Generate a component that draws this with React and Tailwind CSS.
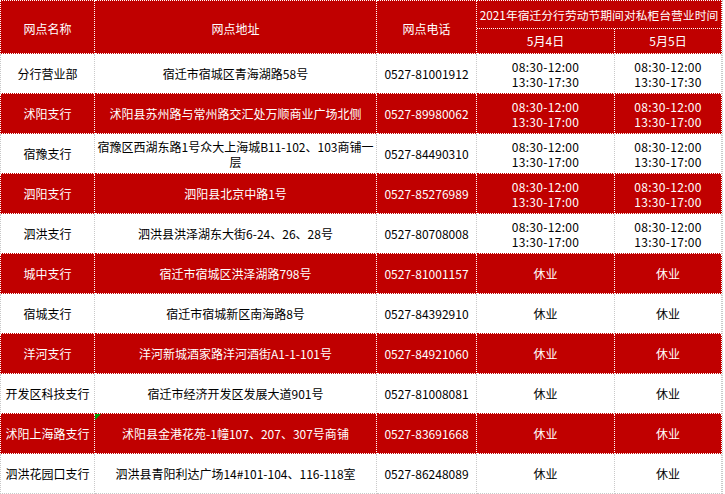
import React from 'react';

const AM = '08:30-12:00';

const rows = [
  { name: '分行营业部', addr: '宿迁市宿城区青海湖路58号', phone: '0527-81001912', end: '17:30' },
  { name: '沭阳支行', addr: '沭阳县苏州路与常州路交汇处万顺商业广场北侧', phone: '0527-89980062', end: '17:00' },
  { name: '宿豫支行', addr: ['宿豫区西湖东路1号众大上海城B11-102、103商铺一', '层'], phone: '0527-84490310', end: '17:00' },
  { name: '泗阳支行', addr: '泗阳县北京中路1号', phone: '0527-85276989', end: '17:00' },
  { name: '泗洪支行', addr: '泗洪县洪泽湖东大街6-24、26、28号', phone: '0527-80708008', end: '17:00' },
  { name: '城中支行', addr: '宿迁市宿城区洪泽湖路798号', phone: '0527-81001157' },
  { name: '宿城支行', addr: '宿迁市宿城新区南海路8号', phone: '0527-84392910' },
  { name: '洋河支行', addr: '洋河新城酒家路洋河酒街A1-1-101号', phone: '0527-84921060' },
  { name: '开发区科技支行', addr: '宿迁市经济开发区发展大道901号', phone: '0527-81008081' },
  { name: '沭阳上海路支行', addr: '沭阳县金港花苑-1幢107、207、307号商铺', phone: '0527-83691668', flag: true },
  { name: '泗洪花园口支行', addr: '泗洪县青阳利达广场14#101-104、116-118室', phone: '0527-86248089' },
];

const headCell = 'flex items-center justify-center text-center text-white bg-[#c00000] border-r border-b border-dotted border-white';

function Hours({ end }) {
  if (!end) return <span>休业</span>;
  return (
    <div className="leading-[15px] tracking-[0.3px]">
      <div>{AM}</div>
      <div>{'13:30-' + end}</div>
    </div>
  );
}

export default function App() {
  return (
    <div
      className="w-[725px] h-[494px] overflow-hidden bg-white flex text-[12px]"
      style={{ fontFamily: '"Noto Sans CJK SC", "Noto Sans", sans-serif' }}
    >
      <div className="w-[722px] grid grid-cols-[95px_282px_100px_138px_107px] grid-rows-[29px_25px_repeat(11,40px)]">
        <div className={headCell + ' row-span-2 border-l border-t pt-[3px]'}>网点名称</div>
        <div className={headCell + ' row-span-2 border-t pt-[3px]'}>网点地址</div>
        <div className={headCell + ' row-span-2 border-t pt-[3px]'}>网点电话</div>
        <div className={headCell + ' col-span-2 border-t whitespace-nowrap text-[11.8px]'}>
          2021年宿迁分行劳动节期间对私柜台营业时间
        </div>
        <div className={headCell}>5月4日</div>
        <div className={headCell}>5月5日</div>

        {rows.map((r, i) => {
          const red = i % 2 === 1;
          const last = i === rows.length - 1;
          const cell = red
            ? 'flex items-center justify-center text-center bg-[#c00000] text-white border-r border-b border-dotted border-white'
            : 'flex items-center justify-center text-center bg-white text-black border-r border-b border-dotted border-r-[#c8c8c8] ' +
              (last ? 'border-b-[#c8c8c8]' : 'border-b-[#c00000]');
          return (
            <React.Fragment key={r.name}>
              <div className={cell + ' border-l ' + (red ? '' : 'border-l-[#c8c8c8]')}>{r.name}</div>
              <div className={cell + ' relative leading-[15px]'}>
                {r.flag && (
                  <span className="absolute left-0 top-0 w-0 h-0 border-t-[6px] border-r-[6px] border-t-[#00a000] border-r-transparent border-solid" />
                )}
                {Array.isArray(r.addr) ? (
                  <div>
                    <div>{r.addr[0]}</div>
                    <div>{r.addr[1]}</div>
                  </div>
                ) : (
                  r.addr
                )}
              </div>
              <div className={cell}>{r.phone}</div>
              <div className={cell}>
                <Hours end={r.end} />
              </div>
              <div className={cell}>
                <Hours end={r.end} />
              </div>
            </React.Fragment>
          );
        })}
      </div>
      <div className="w-[3px] h-full border-l border-dotted border-[#c8c8c8]" />
    </div>
  );
}
